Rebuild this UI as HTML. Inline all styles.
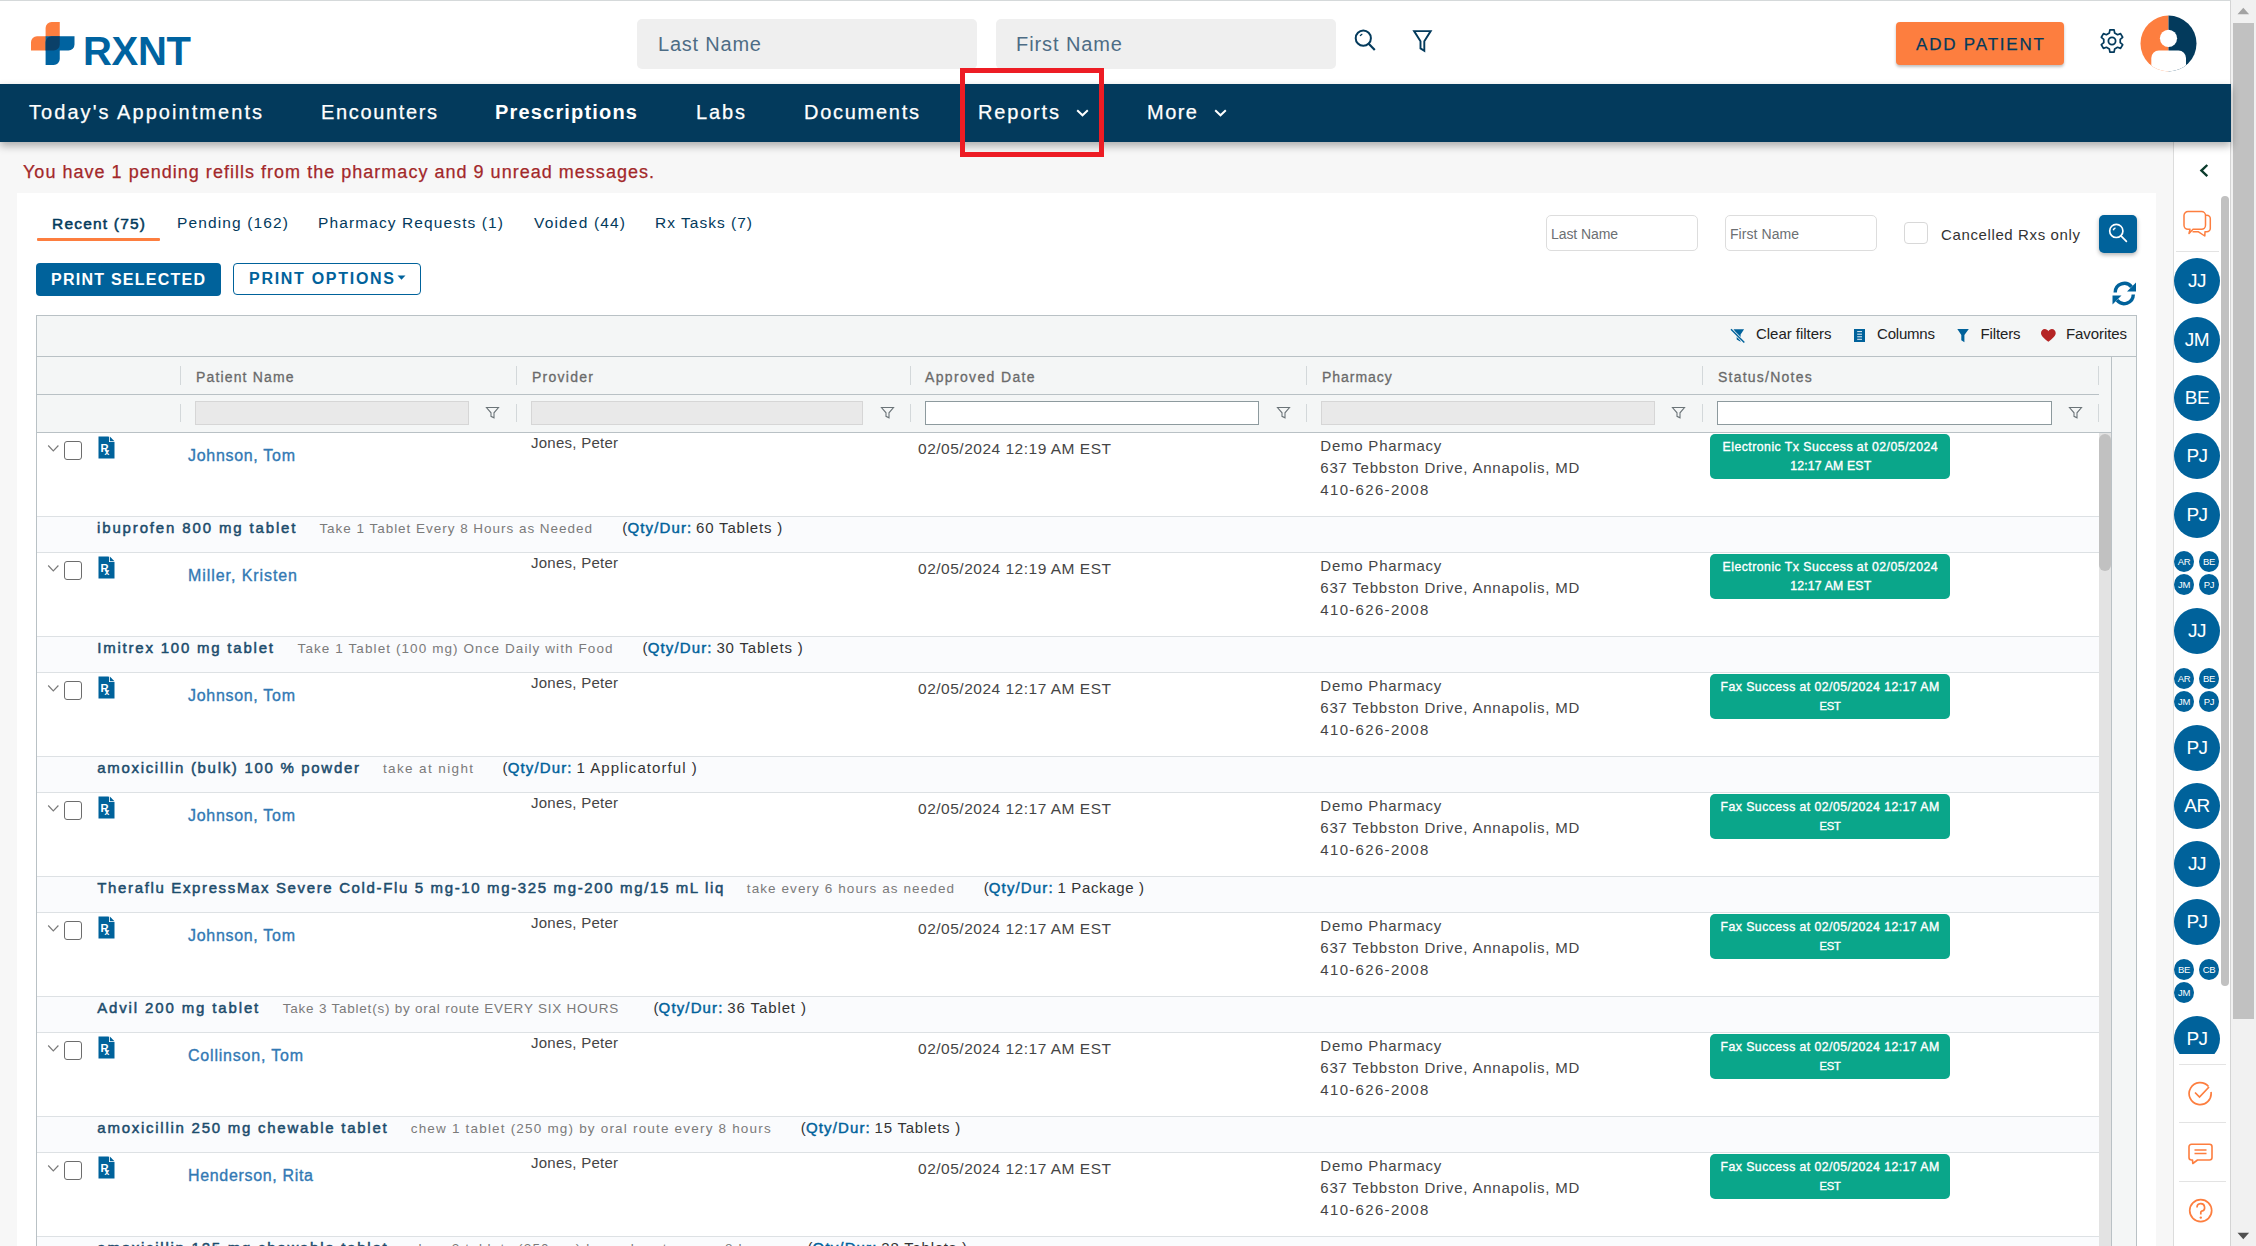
<!DOCTYPE html><html><head><meta charset="utf-8"><style>html,body{margin:0;padding:0;}
body{width:2256px;height:1246px;overflow:hidden;position:relative;background:#f7f7f7;font-family:"Liberation Sans",sans-serif;}
div,svg{box-sizing:border-box;}
</style></head><body><div style="position:absolute;left:0px;top:0px;width:2231px;height:84px;background:#fff;"></div>
<div style="position:absolute;left:0px;top:0px;width:2256px;height:1px;background:#d5d9da;"></div>
<svg style="position:absolute;left:28px;top:19px;" width="50" height="50" viewBox="0 0 50 50">
<path d="M17.6 9 A6 6 0 0 1 23.6 3 H31.75 V31.6 H3 V23.25 A6 6 0 0 1 9 17.25 H17.6 Z" fill="#fd7e3f"/>
<path d="M17.6 17.25 H46.5 V25.6 A6 6 0 0 1 40.5 31.6 H31.75 V40 A6 6 0 0 1 25.75 46 H17.6 Z" fill="#0063a0"/>
<path d="M17.6 23.25 A6 6 0 0 1 23.6 17.25 H31.75 V25.6 A6 6 0 0 1 25.75 31.6 H17.6 Z" fill="#0b4068"/>
</svg>
<div style="position:absolute;left:83px;top:29.00px;white-space:pre;font-family:&quot;Liberation Sans&quot;, sans-serif;font-size:40px;font-weight:700;color:#0063a0;letter-spacing:-0.297px;">RXNT</div>
<div style="position:absolute;left:637px;top:19px;width:340px;height:50px;background:#efefef;border-radius:5px;"></div>
<div style="position:absolute;left:996px;top:19px;width:340px;height:50px;background:#efefef;border-radius:5px;"></div>
<div style="position:absolute;left:658px;top:33.00px;white-space:pre;font-family:&quot;Liberation Sans&quot;, sans-serif;font-size:20px;font-weight:400;color:#4d6c85;letter-spacing:0.785px;">Last Name</div>
<div style="position:absolute;left:1016px;top:33.00px;white-space:pre;font-family:&quot;Liberation Sans&quot;, sans-serif;font-size:20px;font-weight:400;color:#4d6c85;letter-spacing:0.911px;">First Name</div>
<svg style="position:absolute;left:1350px;top:26px;" width="30" height="30" viewBox="0 0 30 30"><circle cx="13.3" cy="12.2" r="7.6" fill="none" stroke="#033a5c" stroke-width="2"/><path d="M18.7 17.7 L24.8 23.9" stroke="#033a5c" stroke-width="2.2"/><path d="M10.2 10 A3.8 3.8 0 0 1 12.3 8.1" fill="none" stroke="#033a5c" stroke-width="1.5"/></svg>
<svg style="position:absolute;left:1410px;top:27px;" width="26" height="28" viewBox="0 0 26 28"><path d="M4.1 4.1 H20.7 L14.3 14.3 V23.8 L10.5 21.4 V14.3 Z" fill="none" stroke="#033a5c" stroke-width="1.9" stroke-linejoin="miter"/></svg>
<div style="position:absolute;left:1896px;top:22px;width:168px;height:43px;background:#fd7e3f;border-radius:4px;box-shadow:0 2px 3px rgba(0,0,0,0.25);"></div>
<div style="position:absolute;left:1916px;top:35.00px;white-space:pre;font-family:&quot;Liberation Sans&quot;, sans-serif;font-size:17px;font-weight:400;color:#033a5c;letter-spacing:1.811px;-webkit-text-stroke:0.25px #033a5c;">ADD PATIENT</div>
<svg style="position:absolute;left:2099.5px;top:29px;" width="24" height="24" viewBox="0 0 24 24"><path d="M9.32 4.04 L9.88 0.90 L14.12 0.90 L14.68 4.04 L17.56 5.70 L20.55 4.62 L22.67 8.28 L20.23 10.34 L20.23 13.66 L22.67 15.72 L20.55 19.38 L17.56 18.30 L14.68 19.96 L14.12 23.10 L9.88 23.10 L9.32 19.96 L6.44 18.30 L3.45 19.38 L1.33 15.72 L3.77 13.66 L3.77 10.34 L1.33 8.28 L3.45 4.62 L6.44 5.70 Z" fill="none" stroke="#033a5c" stroke-width="1.7" stroke-linejoin="round"/><circle cx="12" cy="12" r="3.6" fill="none" stroke="#033a5c" stroke-width="1.8"/></svg>
<svg style="position:absolute;left:2140px;top:15px;" width="57" height="57" viewBox="0 0 57 57"><defs><clipPath id="avc"><circle cx="28.5" cy="28.5" r="28"/></clipPath></defs>
<g clip-path="url(#avc)"><rect x="0" y="0" width="28.5" height="57" fill="#fd7e3f"/><rect x="28.5" y="0" width="29" height="57" fill="#033a5c"/>
<circle cx="28.5" cy="23.3" r="8.6" fill="#fff"/><rect x="11.3" y="35.5" width="34.7" height="30" rx="7.5" fill="#fff"/></g></svg>
<div style="position:absolute;left:0px;top:84px;width:2231px;height:58px;background:#033a5c;box-shadow:0 4px 8px rgba(0,0,0,0.30);z-index:5;"></div>
<div style="position:absolute;left:29px;top:101.00px;white-space:pre;font-family:&quot;Liberation Sans&quot;, sans-serif;font-size:20px;font-weight:400;color:#fff;letter-spacing:2.056px;z-index:6;-webkit-text-stroke:0.25px #fff;">Today&#x27;s Appointments</div>
<div style="position:absolute;left:321px;top:101.00px;white-space:pre;font-family:&quot;Liberation Sans&quot;, sans-serif;font-size:20px;font-weight:400;color:#fff;letter-spacing:1.648px;z-index:6;-webkit-text-stroke:0.25px #fff;">Encounters</div>
<div style="position:absolute;left:495px;top:101.00px;white-space:pre;font-family:&quot;Liberation Sans&quot;, sans-serif;font-size:20px;font-weight:700;color:#fff;letter-spacing:1.181px;z-index:6;">Prescriptions</div>
<div style="position:absolute;left:696px;top:101.00px;white-space:pre;font-family:&quot;Liberation Sans&quot;, sans-serif;font-size:20px;font-weight:400;color:#fff;letter-spacing:1.875px;z-index:6;-webkit-text-stroke:0.25px #fff;">Labs</div>
<div style="position:absolute;left:804px;top:101.00px;white-space:pre;font-family:&quot;Liberation Sans&quot;, sans-serif;font-size:20px;font-weight:400;color:#fff;letter-spacing:1.730px;z-index:6;-webkit-text-stroke:0.25px #fff;">Documents</div>
<div style="position:absolute;left:978px;top:101.00px;white-space:pre;font-family:&quot;Liberation Sans&quot;, sans-serif;font-size:20px;font-weight:400;color:#fff;letter-spacing:1.828px;z-index:6;-webkit-text-stroke:0.25px #fff;">Reports</div>
<div style="position:absolute;left:1147px;top:101.00px;white-space:pre;font-family:&quot;Liberation Sans&quot;, sans-serif;font-size:20px;font-weight:400;color:#fff;letter-spacing:1.474px;z-index:6;-webkit-text-stroke:0.25px #fff;">More</div>
<svg style="position:absolute;left:1075px;top:107px;z-index:6;" width="15" height="12" viewBox="0 0 15 12"><path d="M2.2 3.3 L7.5 8.3 L12.8 3.3" fill="none" stroke="#fff" stroke-width="2"/></svg>
<svg style="position:absolute;left:1213px;top:107px;z-index:6;" width="15" height="12" viewBox="0 0 15 12"><path d="M2.2 3.3 L7.5 8.3 L12.8 3.3" fill="none" stroke="#fff" stroke-width="2"/></svg>
<div style="position:absolute;left:960px;top:68px;width:144px;height:89px;border:5px solid #ed1c24;z-index:7;"></div>
<div style="position:absolute;left:23px;top:162.00px;white-space:pre;font-family:&quot;Liberation Sans&quot;, sans-serif;font-size:18px;font-weight:400;color:#a3282a;letter-spacing:1.020px;-webkit-text-stroke:0.25px #a3282a;">You have 1 pending refills from the pharmacy and 9 unread messages.</div>
<div style="position:absolute;left:17px;top:193px;width:2139px;height:1100px;background:#fff;"></div>
<div style="position:absolute;left:52px;top:215.00px;white-space:pre;font-family:&quot;Liberation Sans&quot;, sans-serif;font-size:15.5px;font-weight:400;color:#033a5c;letter-spacing:1.202px;-webkit-text-stroke:0.5px #033a5c;">Recent (75)</div>
<div style="position:absolute;left:177px;top:214.00px;white-space:pre;font-family:&quot;Liberation Sans&quot;, sans-serif;font-size:15.5px;font-weight:400;color:#033a5c;letter-spacing:1.135px;">Pending (162)</div>
<div style="position:absolute;left:318px;top:214.00px;white-space:pre;font-family:&quot;Liberation Sans&quot;, sans-serif;font-size:15.5px;font-weight:400;color:#033a5c;letter-spacing:1.109px;">Pharmacy Requests (1)</div>
<div style="position:absolute;left:534px;top:214.00px;white-space:pre;font-family:&quot;Liberation Sans&quot;, sans-serif;font-size:15.5px;font-weight:400;color:#033a5c;letter-spacing:1.172px;">Voided (44)</div>
<div style="position:absolute;left:655px;top:214.00px;white-space:pre;font-family:&quot;Liberation Sans&quot;, sans-serif;font-size:15.5px;font-weight:400;color:#033a5c;letter-spacing:1.014px;">Rx Tasks (7)</div>
<div style="position:absolute;left:37px;top:238px;width:123px;height:3px;background:#fd7e3f;border-radius:1px;"></div>
<div style="position:absolute;left:36px;top:263px;width:185px;height:33px;background:#00629b;border-radius:4px;"></div>
<div style="position:absolute;left:51px;top:271.00px;white-space:pre;font-family:&quot;Liberation Sans&quot;, sans-serif;font-size:16px;font-weight:700;color:#fff;letter-spacing:1.246px;">PRINT SELECTED</div>
<div style="position:absolute;left:233px;top:263px;width:188px;height:32px;border:1px solid #00629b;border-radius:4px;background:#fff;"></div>
<div style="position:absolute;left:249px;top:270.00px;white-space:pre;font-family:&quot;Liberation Sans&quot;, sans-serif;font-size:16px;font-weight:700;color:#00629b;letter-spacing:1.712px;">PRINT OPTIONS</div>
<svg style="position:absolute;left:397px;top:275px;" width="10" height="6" viewBox="0 0 10 6"><path d="M0.5 0.5 H8.5 L4.5 4.8 Z" fill="#00629b"/></svg>
<div style="position:absolute;left:1546px;top:215px;width:152px;height:36px;border:1px solid #ddd;border-radius:5px;background:#fff;"></div>
<div style="position:absolute;left:1725px;top:215px;width:152px;height:36px;border:1px solid #ddd;border-radius:5px;background:#fff;"></div>
<div style="position:absolute;left:1551px;top:226.00px;white-space:pre;font-family:&quot;Liberation Sans&quot;, sans-serif;font-size:14px;font-weight:400;color:#6c6f73;letter-spacing:-0.088px;">Last Name</div>
<div style="position:absolute;left:1730px;top:226.00px;white-space:pre;font-family:&quot;Liberation Sans&quot;, sans-serif;font-size:14px;font-weight:400;color:#6c6f73;letter-spacing:0.061px;">First Name</div>
<div style="position:absolute;left:1904px;top:222px;width:24px;height:22px;border:1px solid #d8d8d8;border-radius:4px;background:#fff;"></div>
<div style="position:absolute;left:1941px;top:226.00px;white-space:pre;font-family:&quot;Liberation Sans&quot;, sans-serif;font-size:15px;font-weight:400;color:#333;letter-spacing:0.623px;">Cancelled Rxs only</div>
<div style="position:absolute;left:2099px;top:215px;width:38px;height:38px;background:#00629b;border-radius:5px;box-shadow:0 2px 4px rgba(0,0,0,0.3);"></div>
<svg style="position:absolute;left:2107px;top:222px;" width="24" height="24" viewBox="0 0 24 24"><circle cx="9.3" cy="8.9" r="6.6" fill="none" stroke="#fff" stroke-width="1.7"/><path d="M14 13.8 L19.4 19.4" stroke="#fff" stroke-width="1.7" stroke-linecap="round"/><path d="M6.3 8.2 A3.2 3.2 0 0 1 8.5 5.9" fill="none" stroke="#fff" stroke-width="1.5"/></svg>
<svg style="position:absolute;left:2111px;top:280px;" width="27" height="27" viewBox="0 0 27 27"><path d="M4.2 12.5 A9.2 9.2 0 0 1 20.5 6.8" fill="none" stroke="#00629b" stroke-width="3.4"/>
<path d="M25 2.5 V11.5 H16 Z" fill="#00629b"/>
<path d="M22.3 14.5 A9.2 9.2 0 0 1 6 20.2" fill="none" stroke="#00629b" stroke-width="3.4"/>
<path d="M1.5 24.5 V15.5 H10.5 Z" fill="#00629b"/></svg>
<div style="position:absolute;left:36px;top:315px;width:2101px;height:1000px;border:1px solid #b9c1c5;background:#fff;"></div>
<div style="position:absolute;left:37px;top:316px;width:2099px;height:41px;background:#f4f6f6;border-bottom:1px solid #b9c1c5;"></div>
<div style="position:absolute;left:37px;top:357px;width:2074px;height:75px;background:#f4f6f6;"></div>
<div style="position:absolute;left:37px;top:394px;width:2062px;height:1px;background:#b9c1c5;"></div>
<div style="position:absolute;left:37px;top:432px;width:2074px;height:1px;background:#b9c1c5;"></div>
<div style="position:absolute;left:2111px;top:357px;width:25px;height:1000px;background:#f4f6f6;border-left:1px solid #b9c1c5;"></div>
<div style="position:absolute;left:180px;top:366px;width:1px;height:19px;background:#d3d8da;"></div>
<div style="position:absolute;left:180px;top:404px;width:1px;height:18px;background:#d3d8da;"></div>
<div style="position:absolute;left:516px;top:366px;width:1px;height:19px;background:#d3d8da;"></div>
<div style="position:absolute;left:516px;top:404px;width:1px;height:18px;background:#d3d8da;"></div>
<div style="position:absolute;left:910px;top:366px;width:1px;height:19px;background:#d3d8da;"></div>
<div style="position:absolute;left:910px;top:404px;width:1px;height:18px;background:#d3d8da;"></div>
<div style="position:absolute;left:1306px;top:366px;width:1px;height:19px;background:#d3d8da;"></div>
<div style="position:absolute;left:1306px;top:404px;width:1px;height:18px;background:#d3d8da;"></div>
<div style="position:absolute;left:1702px;top:366px;width:1px;height:19px;background:#d3d8da;"></div>
<div style="position:absolute;left:1702px;top:404px;width:1px;height:18px;background:#d3d8da;"></div>
<div style="position:absolute;left:2098px;top:366px;width:1px;height:19px;background:#d3d8da;"></div>
<div style="position:absolute;left:2098px;top:404px;width:1px;height:18px;background:#d3d8da;"></div>
<div style="position:absolute;left:196px;top:369.00px;white-space:pre;font-family:&quot;Liberation Sans&quot;, sans-serif;font-size:14px;font-weight:400;color:#6a6a6a;letter-spacing:1.152px;-webkit-text-stroke:0.3px #6a6a6a;">Patient Name</div>
<div style="position:absolute;left:532px;top:369.00px;white-space:pre;font-family:&quot;Liberation Sans&quot;, sans-serif;font-size:14px;font-weight:400;color:#6a6a6a;letter-spacing:1.266px;-webkit-text-stroke:0.3px #6a6a6a;">Provider</div>
<div style="position:absolute;left:925px;top:369.00px;white-space:pre;font-family:&quot;Liberation Sans&quot;, sans-serif;font-size:14px;font-weight:400;color:#6a6a6a;letter-spacing:1.349px;-webkit-text-stroke:0.3px #6a6a6a;">Approved Date</div>
<div style="position:absolute;left:1322px;top:369.00px;white-space:pre;font-family:&quot;Liberation Sans&quot;, sans-serif;font-size:14px;font-weight:400;color:#6a6a6a;letter-spacing:0.953px;-webkit-text-stroke:0.3px #6a6a6a;">Pharmacy</div>
<div style="position:absolute;left:1718px;top:369.00px;white-space:pre;font-family:&quot;Liberation Sans&quot;, sans-serif;font-size:14px;font-weight:400;color:#6a6a6a;letter-spacing:1.231px;-webkit-text-stroke:0.3px #6a6a6a;">Status/Notes</div>
<div style="position:absolute;left:195px;top:401px;width:274px;height:24px;background:#e9e9e9;border:1px solid #d6d6d6;"></div>
<svg style="position:absolute;left:485px;top:406px;" width="16" height="13" viewBox="0 0 16 13"><path d="M1.5 1.5 H13.5 L9 6.8 V11.8 L6 10.3 V6.8 Z" fill="none" stroke="#6b7478" stroke-width="1.1" stroke-linejoin="miter"/></svg>
<div style="position:absolute;left:531px;top:401px;width:332px;height:24px;background:#e9e9e9;border:1px solid #d6d6d6;"></div>
<svg style="position:absolute;left:880px;top:406px;" width="16" height="13" viewBox="0 0 16 13"><path d="M1.5 1.5 H13.5 L9 6.8 V11.8 L6 10.3 V6.8 Z" fill="none" stroke="#6b7478" stroke-width="1.1" stroke-linejoin="miter"/></svg>
<div style="position:absolute;left:925px;top:401px;width:334px;height:24px;background:#fff;border:1px solid #8d9a9e;"></div>
<svg style="position:absolute;left:1275.5px;top:406px;" width="16" height="13" viewBox="0 0 16 13"><path d="M1.5 1.5 H13.5 L9 6.8 V11.8 L6 10.3 V6.8 Z" fill="none" stroke="#6b7478" stroke-width="1.1" stroke-linejoin="miter"/></svg>
<div style="position:absolute;left:1321px;top:401px;width:334px;height:24px;background:#e9e9e9;border:1px solid #d6d6d6;"></div>
<svg style="position:absolute;left:1671px;top:406px;" width="16" height="13" viewBox="0 0 16 13"><path d="M1.5 1.5 H13.5 L9 6.8 V11.8 L6 10.3 V6.8 Z" fill="none" stroke="#6b7478" stroke-width="1.1" stroke-linejoin="miter"/></svg>
<div style="position:absolute;left:1717px;top:401px;width:335px;height:24px;background:#fff;border:1px solid #8d9a9e;"></div>
<svg style="position:absolute;left:2068px;top:406px;" width="16" height="13" viewBox="0 0 16 13"><path d="M1.5 1.5 H13.5 L9 6.8 V11.8 L6 10.3 V6.8 Z" fill="none" stroke="#6b7478" stroke-width="1.1" stroke-linejoin="miter"/></svg>
<div style="position:absolute;left:1756px;top:325.00px;white-space:pre;font-family:&quot;Liberation Sans&quot;, sans-serif;font-size:15px;font-weight:400;color:#222;letter-spacing:-0.030px;">Clear filters</div>
<div style="position:absolute;left:1877px;top:325.00px;white-space:pre;font-family:&quot;Liberation Sans&quot;, sans-serif;font-size:15px;font-weight:400;color:#222;letter-spacing:-0.198px;">Columns</div>
<div style="position:absolute;left:1980.5px;top:325.00px;white-space:pre;font-family:&quot;Liberation Sans&quot;, sans-serif;font-size:15px;font-weight:400;color:#222;letter-spacing:-0.141px;">Filters</div>
<div style="position:absolute;left:2066px;top:325.00px;white-space:pre;font-family:&quot;Liberation Sans&quot;, sans-serif;font-size:15px;font-weight:400;color:#222;letter-spacing:-0.086px;">Favorites</div>
<svg style="position:absolute;left:1729px;top:327px;" width="17" height="17" viewBox="0 0 17 17"><path d="M4.5 2.2 H15.1 L11.6 7.5 V14.8 L7.7 12.6 V7.5 Z" fill="#00629b"/><path d="M2 2.2 L15.3 15.6" stroke="#f4f6f6" stroke-width="2.8"/><path d="M2 2.2 L15.3 15.6" stroke="#00629b" stroke-width="1.4"/></svg>
<svg style="position:absolute;left:1853px;top:327px;" width="13" height="17" viewBox="0 0 13 17"><rect x="1" y="2" width="11" height="13" fill="#00629b"/><path d="M4.2 4.6 H9 M4.2 7.2 H9 M4.2 9.8 H9 M4.2 12.3 H9" stroke="#fff" stroke-width="0.9"/></svg>
<svg style="position:absolute;left:1956px;top:328px;" width="14" height="16" viewBox="0 0 14 16"><path d="M1.3 1 H12.8 L8.4 7 V14.2 L5.3 12.3 V7 Z" fill="#00629b"/></svg>
<svg style="position:absolute;left:2041px;top:329px;" width="15" height="13" viewBox="0 0 15 13"><path d="M7.35 12.8 C2.5 9 0 6.8 0 4 C0 1.8 1.7 0 3.8 0 C5.4 0 6.6 1 7.35 2.2 C8.1 1 9.3 0 10.9 0 C13 0 14.7 1.8 14.7 4 C14.7 6.8 12.2 9 7.35 12.8 Z" fill="#b52525"/></svg>
<div style="position:absolute;left:2099px;top:433px;width:12px;height:900px;background:#e3e3e3;"></div>
<div style="position:absolute;left:2099px;top:434px;width:12px;height:137px;background:#c1c1c1;border-radius:6px;"></div>
<div style="position:absolute;left:37px;top:516px;width:2062px;height:1px;background:#dde1e4;"></div>
<div style="position:absolute;left:37px;top:517px;width:2062px;height:35px;background:#fafbfd;"></div>
<div style="position:absolute;left:37px;top:552px;width:2062px;height:1px;background:#dde1e4;"></div>
<svg style="position:absolute;left:47px;top:444px;" width="13" height="9" viewBox="0 0 13 9"><path d="M1.2 1.5 L6.3 6.8 L11.4 1.5" fill="none" stroke="#7a7a7a" stroke-width="1.2"/></svg>
<div style="position:absolute;left:64px;top:441px;width:18px;height:19px;border:1.5px solid #6d6d6d;border-radius:3px;background:#fff;"></div>
<svg style="position:absolute;left:98px;top:436px;" width="17" height="23" viewBox="0 0 17 23"><path d="M0.5 0.5 H10.5 L16.5 6.5 V22.5 H0.5 Z" fill="#00629b"/>
<path d="M11 0 L11 6 L17 6 Z" fill="#fff"/><path d="M11.8 0.5 L16.5 5.2 H11.8 Z" fill="#00629b"/>
<text x="2.4" y="16.3" font-family="Liberation Sans" font-weight="700" font-size="11.2" fill="#fff">R</text>
<text x="6.6" y="19" font-family="Liberation Sans" font-weight="700" font-size="8.5" fill="#fff">x</text></svg>
<div style="position:absolute;left:188px;top:447.00px;white-space:pre;font-family:&quot;Liberation Sans&quot;, sans-serif;font-size:16px;font-weight:400;color:#3279b4;letter-spacing:0.697px;-webkit-text-stroke:0.35px #3279b4;">Johnson, Tom</div>
<div style="position:absolute;left:531px;top:434.00px;white-space:pre;font-family:&quot;Liberation Sans&quot;, sans-serif;font-size:15px;font-weight:400;color:#454545;letter-spacing:0.253px;">Jones, Peter</div>
<div style="position:absolute;left:918px;top:440.00px;white-space:pre;font-family:&quot;Liberation Sans&quot;, sans-serif;font-size:15.5px;font-weight:400;color:#454545;letter-spacing:0.508px;">02/05/2024 12:19 AM EST</div>
<div style="position:absolute;left:1320.3px;top:437.00px;white-space:pre;font-family:&quot;Liberation Sans&quot;, sans-serif;font-size:15px;font-weight:400;color:#454545;letter-spacing:0.775px;">Demo Pharmacy</div>
<div style="position:absolute;left:1320.3px;top:459.00px;white-space:pre;font-family:&quot;Liberation Sans&quot;, sans-serif;font-size:15px;font-weight:400;color:#454545;letter-spacing:0.780px;">637 Tebbston Drive, Annapolis, MD</div>
<div style="position:absolute;left:1320.3px;top:481.00px;white-space:pre;font-family:&quot;Liberation Sans&quot;, sans-serif;font-size:15px;font-weight:400;color:#454545;letter-spacing:1.325px;">410-626-2008</div>
<div style="position:absolute;left:1710px;top:434px;width:240px;height:45px;background:#0aa68a;border-radius:5px;"></div>
<div style="position:absolute;left:1722.6px;top:440.00px;white-space:pre;font-family:&quot;Liberation Sans&quot;, sans-serif;font-size:12.3px;font-weight:400;color:#fff;letter-spacing:0.460px;-webkit-text-stroke:0.35px #fff;">Electronic Tx Success at 02/05/2024</div>
<div style="position:absolute;left:1790.2px;top:459.00px;white-space:pre;font-family:&quot;Liberation Sans&quot;, sans-serif;font-size:12.3px;font-weight:400;color:#fff;letter-spacing:0.155px;-webkit-text-stroke:0.35px #fff;">12:17 AM EST</div>
<div style="position:absolute;left:97px;top:519.00px;white-space:pre;font-family:&quot;Liberation Sans&quot;, sans-serif;font-size:15px;font-weight:400;color:#1c4c6c;letter-spacing:1.858px;-webkit-text-stroke:0.5px #1c4c6c;">ibuprofen 800 mg tablet</div>
<div style="position:absolute;left:319.4px;top:521.00px;white-space:pre;font-family:&quot;Liberation Sans&quot;, sans-serif;font-size:13.5px;font-weight:400;color:#7a7a7a;letter-spacing:0.971px;">Take 1 Tablet Every 8 Hours as Needed</div>
<div style="position:absolute;left:622.3px;top:519.00px;white-space:pre;font-family:&quot;Liberation Sans&quot;, sans-serif;font-size:15px;font-weight:400;color:#333;letter-spacing:0.000px;">(</div>
<div style="position:absolute;left:627.4px;top:519.00px;white-space:pre;font-family:&quot;Liberation Sans&quot;, sans-serif;font-size:15px;font-weight:400;color:#00629b;letter-spacing:1.137px;-webkit-text-stroke:0.45px #00629b;">Qty/Dur:</div>
<div style="position:absolute;left:696.0999999999999px;top:519.00px;white-space:pre;font-family:&quot;Liberation Sans&quot;, sans-serif;font-size:15px;font-weight:400;color:#333;letter-spacing:0.811px;">60 Tablets )</div>
<div style="position:absolute;left:37px;top:636px;width:2062px;height:1px;background:#dde1e4;"></div>
<div style="position:absolute;left:37px;top:637px;width:2062px;height:35px;background:#fafbfd;"></div>
<div style="position:absolute;left:37px;top:672px;width:2062px;height:1px;background:#dde1e4;"></div>
<svg style="position:absolute;left:47px;top:564px;" width="13" height="9" viewBox="0 0 13 9"><path d="M1.2 1.5 L6.3 6.8 L11.4 1.5" fill="none" stroke="#7a7a7a" stroke-width="1.2"/></svg>
<div style="position:absolute;left:64px;top:561px;width:18px;height:19px;border:1.5px solid #6d6d6d;border-radius:3px;background:#fff;"></div>
<svg style="position:absolute;left:98px;top:556px;" width="17" height="23" viewBox="0 0 17 23"><path d="M0.5 0.5 H10.5 L16.5 6.5 V22.5 H0.5 Z" fill="#00629b"/>
<path d="M11 0 L11 6 L17 6 Z" fill="#fff"/><path d="M11.8 0.5 L16.5 5.2 H11.8 Z" fill="#00629b"/>
<text x="2.4" y="16.3" font-family="Liberation Sans" font-weight="700" font-size="11.2" fill="#fff">R</text>
<text x="6.6" y="19" font-family="Liberation Sans" font-weight="700" font-size="8.5" fill="#fff">x</text></svg>
<div style="position:absolute;left:188px;top:567.00px;white-space:pre;font-family:&quot;Liberation Sans&quot;, sans-serif;font-size:16px;font-weight:400;color:#3279b4;letter-spacing:0.926px;-webkit-text-stroke:0.35px #3279b4;">Miller, Kristen</div>
<div style="position:absolute;left:531px;top:554.00px;white-space:pre;font-family:&quot;Liberation Sans&quot;, sans-serif;font-size:15px;font-weight:400;color:#454545;letter-spacing:0.253px;">Jones, Peter</div>
<div style="position:absolute;left:918px;top:560.00px;white-space:pre;font-family:&quot;Liberation Sans&quot;, sans-serif;font-size:15.5px;font-weight:400;color:#454545;letter-spacing:0.508px;">02/05/2024 12:19 AM EST</div>
<div style="position:absolute;left:1320.3px;top:557.00px;white-space:pre;font-family:&quot;Liberation Sans&quot;, sans-serif;font-size:15px;font-weight:400;color:#454545;letter-spacing:0.775px;">Demo Pharmacy</div>
<div style="position:absolute;left:1320.3px;top:579.00px;white-space:pre;font-family:&quot;Liberation Sans&quot;, sans-serif;font-size:15px;font-weight:400;color:#454545;letter-spacing:0.780px;">637 Tebbston Drive, Annapolis, MD</div>
<div style="position:absolute;left:1320.3px;top:601.00px;white-space:pre;font-family:&quot;Liberation Sans&quot;, sans-serif;font-size:15px;font-weight:400;color:#454545;letter-spacing:1.325px;">410-626-2008</div>
<div style="position:absolute;left:1710px;top:554px;width:240px;height:45px;background:#0aa68a;border-radius:5px;"></div>
<div style="position:absolute;left:1722.6px;top:560.00px;white-space:pre;font-family:&quot;Liberation Sans&quot;, sans-serif;font-size:12.3px;font-weight:400;color:#fff;letter-spacing:0.460px;-webkit-text-stroke:0.35px #fff;">Electronic Tx Success at 02/05/2024</div>
<div style="position:absolute;left:1790.2px;top:579.00px;white-space:pre;font-family:&quot;Liberation Sans&quot;, sans-serif;font-size:12.3px;font-weight:400;color:#fff;letter-spacing:0.155px;-webkit-text-stroke:0.35px #fff;">12:17 AM EST</div>
<div style="position:absolute;left:97.2px;top:639.00px;white-space:pre;font-family:&quot;Liberation Sans&quot;, sans-serif;font-size:15px;font-weight:400;color:#1c4c6c;letter-spacing:1.787px;-webkit-text-stroke:0.5px #1c4c6c;">Imitrex 100 mg tablet</div>
<div style="position:absolute;left:297.6px;top:641.00px;white-space:pre;font-family:&quot;Liberation Sans&quot;, sans-serif;font-size:13.5px;font-weight:400;color:#7a7a7a;letter-spacing:1.090px;">Take 1 Tablet (100 mg) Once Daily with Food</div>
<div style="position:absolute;left:642.6px;top:639.00px;white-space:pre;font-family:&quot;Liberation Sans&quot;, sans-serif;font-size:15px;font-weight:400;color:#333;letter-spacing:0.000px;">(</div>
<div style="position:absolute;left:647.7px;top:639.00px;white-space:pre;font-family:&quot;Liberation Sans&quot;, sans-serif;font-size:15px;font-weight:400;color:#00629b;letter-spacing:1.137px;-webkit-text-stroke:0.45px #00629b;">Qty/Dur:</div>
<div style="position:absolute;left:716.4px;top:639.00px;white-space:pre;font-family:&quot;Liberation Sans&quot;, sans-serif;font-size:15px;font-weight:400;color:#333;letter-spacing:0.820px;">30 Tablets )</div>
<div style="position:absolute;left:37px;top:756px;width:2062px;height:1px;background:#dde1e4;"></div>
<div style="position:absolute;left:37px;top:757px;width:2062px;height:35px;background:#fafbfd;"></div>
<div style="position:absolute;left:37px;top:792px;width:2062px;height:1px;background:#dde1e4;"></div>
<svg style="position:absolute;left:47px;top:684px;" width="13" height="9" viewBox="0 0 13 9"><path d="M1.2 1.5 L6.3 6.8 L11.4 1.5" fill="none" stroke="#7a7a7a" stroke-width="1.2"/></svg>
<div style="position:absolute;left:64px;top:681px;width:18px;height:19px;border:1.5px solid #6d6d6d;border-radius:3px;background:#fff;"></div>
<svg style="position:absolute;left:98px;top:676px;" width="17" height="23" viewBox="0 0 17 23"><path d="M0.5 0.5 H10.5 L16.5 6.5 V22.5 H0.5 Z" fill="#00629b"/>
<path d="M11 0 L11 6 L17 6 Z" fill="#fff"/><path d="M11.8 0.5 L16.5 5.2 H11.8 Z" fill="#00629b"/>
<text x="2.4" y="16.3" font-family="Liberation Sans" font-weight="700" font-size="11.2" fill="#fff">R</text>
<text x="6.6" y="19" font-family="Liberation Sans" font-weight="700" font-size="8.5" fill="#fff">x</text></svg>
<div style="position:absolute;left:188px;top:687.00px;white-space:pre;font-family:&quot;Liberation Sans&quot;, sans-serif;font-size:16px;font-weight:400;color:#3279b4;letter-spacing:0.697px;-webkit-text-stroke:0.35px #3279b4;">Johnson, Tom</div>
<div style="position:absolute;left:531px;top:674.00px;white-space:pre;font-family:&quot;Liberation Sans&quot;, sans-serif;font-size:15px;font-weight:400;color:#454545;letter-spacing:0.253px;">Jones, Peter</div>
<div style="position:absolute;left:918px;top:680.00px;white-space:pre;font-family:&quot;Liberation Sans&quot;, sans-serif;font-size:15.5px;font-weight:400;color:#454545;letter-spacing:0.508px;">02/05/2024 12:17 AM EST</div>
<div style="position:absolute;left:1320.3px;top:677.00px;white-space:pre;font-family:&quot;Liberation Sans&quot;, sans-serif;font-size:15px;font-weight:400;color:#454545;letter-spacing:0.775px;">Demo Pharmacy</div>
<div style="position:absolute;left:1320.3px;top:699.00px;white-space:pre;font-family:&quot;Liberation Sans&quot;, sans-serif;font-size:15px;font-weight:400;color:#454545;letter-spacing:0.780px;">637 Tebbston Drive, Annapolis, MD</div>
<div style="position:absolute;left:1320.3px;top:721.00px;white-space:pre;font-family:&quot;Liberation Sans&quot;, sans-serif;font-size:15px;font-weight:400;color:#454545;letter-spacing:1.325px;">410-626-2008</div>
<div style="position:absolute;left:1710px;top:674px;width:240px;height:45px;background:#0aa68a;border-radius:5px;"></div>
<div style="position:absolute;left:1720.6px;top:680.00px;white-space:pre;font-family:&quot;Liberation Sans&quot;, sans-serif;font-size:12.3px;font-weight:400;color:#fff;letter-spacing:0.430px;-webkit-text-stroke:0.35px #fff;">Fax Success at 02/05/2024 12:17 AM</div>
<div style="position:absolute;left:1819.6px;top:700.00px;white-space:pre;font-family:&quot;Liberation Sans&quot;, sans-serif;font-size:11.2px;font-weight:400;color:#fff;letter-spacing:-0.283px;-webkit-text-stroke:0.35px #fff;">EST</div>
<div style="position:absolute;left:97.2px;top:759.00px;white-space:pre;font-family:&quot;Liberation Sans&quot;, sans-serif;font-size:15px;font-weight:400;color:#1c4c6c;letter-spacing:1.695px;-webkit-text-stroke:0.5px #1c4c6c;">amoxicillin (bulk) 100 % powder</div>
<div style="position:absolute;left:382.9px;top:761.00px;white-space:pre;font-family:&quot;Liberation Sans&quot;, sans-serif;font-size:13.5px;font-weight:400;color:#7a7a7a;letter-spacing:1.386px;">take at night</div>
<div style="position:absolute;left:502.6px;top:759.00px;white-space:pre;font-family:&quot;Liberation Sans&quot;, sans-serif;font-size:15px;font-weight:400;color:#333;letter-spacing:0.000px;">(</div>
<div style="position:absolute;left:507.70000000000005px;top:759.00px;white-space:pre;font-family:&quot;Liberation Sans&quot;, sans-serif;font-size:15px;font-weight:400;color:#00629b;letter-spacing:1.137px;-webkit-text-stroke:0.45px #00629b;">Qty/Dur:</div>
<div style="position:absolute;left:576.4px;top:759.00px;white-space:pre;font-family:&quot;Liberation Sans&quot;, sans-serif;font-size:15px;font-weight:400;color:#333;letter-spacing:1.063px;">1 Applicatorful )</div>
<div style="position:absolute;left:37px;top:876px;width:2062px;height:1px;background:#dde1e4;"></div>
<div style="position:absolute;left:37px;top:877px;width:2062px;height:35px;background:#fafbfd;"></div>
<div style="position:absolute;left:37px;top:912px;width:2062px;height:1px;background:#dde1e4;"></div>
<svg style="position:absolute;left:47px;top:804px;" width="13" height="9" viewBox="0 0 13 9"><path d="M1.2 1.5 L6.3 6.8 L11.4 1.5" fill="none" stroke="#7a7a7a" stroke-width="1.2"/></svg>
<div style="position:absolute;left:64px;top:801px;width:18px;height:19px;border:1.5px solid #6d6d6d;border-radius:3px;background:#fff;"></div>
<svg style="position:absolute;left:98px;top:796px;" width="17" height="23" viewBox="0 0 17 23"><path d="M0.5 0.5 H10.5 L16.5 6.5 V22.5 H0.5 Z" fill="#00629b"/>
<path d="M11 0 L11 6 L17 6 Z" fill="#fff"/><path d="M11.8 0.5 L16.5 5.2 H11.8 Z" fill="#00629b"/>
<text x="2.4" y="16.3" font-family="Liberation Sans" font-weight="700" font-size="11.2" fill="#fff">R</text>
<text x="6.6" y="19" font-family="Liberation Sans" font-weight="700" font-size="8.5" fill="#fff">x</text></svg>
<div style="position:absolute;left:188px;top:807.00px;white-space:pre;font-family:&quot;Liberation Sans&quot;, sans-serif;font-size:16px;font-weight:400;color:#3279b4;letter-spacing:0.697px;-webkit-text-stroke:0.35px #3279b4;">Johnson, Tom</div>
<div style="position:absolute;left:531px;top:794.00px;white-space:pre;font-family:&quot;Liberation Sans&quot;, sans-serif;font-size:15px;font-weight:400;color:#454545;letter-spacing:0.253px;">Jones, Peter</div>
<div style="position:absolute;left:918px;top:800.00px;white-space:pre;font-family:&quot;Liberation Sans&quot;, sans-serif;font-size:15.5px;font-weight:400;color:#454545;letter-spacing:0.508px;">02/05/2024 12:17 AM EST</div>
<div style="position:absolute;left:1320.3px;top:797.00px;white-space:pre;font-family:&quot;Liberation Sans&quot;, sans-serif;font-size:15px;font-weight:400;color:#454545;letter-spacing:0.775px;">Demo Pharmacy</div>
<div style="position:absolute;left:1320.3px;top:819.00px;white-space:pre;font-family:&quot;Liberation Sans&quot;, sans-serif;font-size:15px;font-weight:400;color:#454545;letter-spacing:0.780px;">637 Tebbston Drive, Annapolis, MD</div>
<div style="position:absolute;left:1320.3px;top:841.00px;white-space:pre;font-family:&quot;Liberation Sans&quot;, sans-serif;font-size:15px;font-weight:400;color:#454545;letter-spacing:1.325px;">410-626-2008</div>
<div style="position:absolute;left:1710px;top:794px;width:240px;height:45px;background:#0aa68a;border-radius:5px;"></div>
<div style="position:absolute;left:1720.6px;top:800.00px;white-space:pre;font-family:&quot;Liberation Sans&quot;, sans-serif;font-size:12.3px;font-weight:400;color:#fff;letter-spacing:0.430px;-webkit-text-stroke:0.35px #fff;">Fax Success at 02/05/2024 12:17 AM</div>
<div style="position:absolute;left:1819.6px;top:820.00px;white-space:pre;font-family:&quot;Liberation Sans&quot;, sans-serif;font-size:11.2px;font-weight:400;color:#fff;letter-spacing:-0.283px;-webkit-text-stroke:0.35px #fff;">EST</div>
<div style="position:absolute;left:97.3px;top:879.00px;white-space:pre;font-family:&quot;Liberation Sans&quot;, sans-serif;font-size:15px;font-weight:400;color:#1c4c6c;letter-spacing:1.639px;-webkit-text-stroke:0.5px #1c4c6c;">Theraflu ExpressMax Severe Cold-Flu 5 mg-10 mg-325 mg-200 mg/15 mL liq</div>
<div style="position:absolute;left:746.8px;top:881.00px;white-space:pre;font-family:&quot;Liberation Sans&quot;, sans-serif;font-size:13.5px;font-weight:400;color:#7a7a7a;letter-spacing:1.086px;">take every 6 hours as needed</div>
<div style="position:absolute;left:983.7px;top:879.00px;white-space:pre;font-family:&quot;Liberation Sans&quot;, sans-serif;font-size:15px;font-weight:400;color:#333;letter-spacing:0.000px;">(</div>
<div style="position:absolute;left:988.8000000000001px;top:879.00px;white-space:pre;font-family:&quot;Liberation Sans&quot;, sans-serif;font-size:15px;font-weight:400;color:#00629b;letter-spacing:1.137px;-webkit-text-stroke:0.45px #00629b;">Qty/Dur:</div>
<div style="position:absolute;left:1057.5px;top:879.00px;white-space:pre;font-family:&quot;Liberation Sans&quot;, sans-serif;font-size:15px;font-weight:400;color:#333;letter-spacing:0.645px;">1 Package )</div>
<div style="position:absolute;left:37px;top:996px;width:2062px;height:1px;background:#dde1e4;"></div>
<div style="position:absolute;left:37px;top:997px;width:2062px;height:35px;background:#fafbfd;"></div>
<div style="position:absolute;left:37px;top:1032px;width:2062px;height:1px;background:#dde1e4;"></div>
<svg style="position:absolute;left:47px;top:924px;" width="13" height="9" viewBox="0 0 13 9"><path d="M1.2 1.5 L6.3 6.8 L11.4 1.5" fill="none" stroke="#7a7a7a" stroke-width="1.2"/></svg>
<div style="position:absolute;left:64px;top:921px;width:18px;height:19px;border:1.5px solid #6d6d6d;border-radius:3px;background:#fff;"></div>
<svg style="position:absolute;left:98px;top:916px;" width="17" height="23" viewBox="0 0 17 23"><path d="M0.5 0.5 H10.5 L16.5 6.5 V22.5 H0.5 Z" fill="#00629b"/>
<path d="M11 0 L11 6 L17 6 Z" fill="#fff"/><path d="M11.8 0.5 L16.5 5.2 H11.8 Z" fill="#00629b"/>
<text x="2.4" y="16.3" font-family="Liberation Sans" font-weight="700" font-size="11.2" fill="#fff">R</text>
<text x="6.6" y="19" font-family="Liberation Sans" font-weight="700" font-size="8.5" fill="#fff">x</text></svg>
<div style="position:absolute;left:188px;top:927.00px;white-space:pre;font-family:&quot;Liberation Sans&quot;, sans-serif;font-size:16px;font-weight:400;color:#3279b4;letter-spacing:0.697px;-webkit-text-stroke:0.35px #3279b4;">Johnson, Tom</div>
<div style="position:absolute;left:531px;top:914.00px;white-space:pre;font-family:&quot;Liberation Sans&quot;, sans-serif;font-size:15px;font-weight:400;color:#454545;letter-spacing:0.253px;">Jones, Peter</div>
<div style="position:absolute;left:918px;top:920.00px;white-space:pre;font-family:&quot;Liberation Sans&quot;, sans-serif;font-size:15.5px;font-weight:400;color:#454545;letter-spacing:0.508px;">02/05/2024 12:17 AM EST</div>
<div style="position:absolute;left:1320.3px;top:917.00px;white-space:pre;font-family:&quot;Liberation Sans&quot;, sans-serif;font-size:15px;font-weight:400;color:#454545;letter-spacing:0.775px;">Demo Pharmacy</div>
<div style="position:absolute;left:1320.3px;top:939.00px;white-space:pre;font-family:&quot;Liberation Sans&quot;, sans-serif;font-size:15px;font-weight:400;color:#454545;letter-spacing:0.780px;">637 Tebbston Drive, Annapolis, MD</div>
<div style="position:absolute;left:1320.3px;top:961.00px;white-space:pre;font-family:&quot;Liberation Sans&quot;, sans-serif;font-size:15px;font-weight:400;color:#454545;letter-spacing:1.325px;">410-626-2008</div>
<div style="position:absolute;left:1710px;top:914px;width:240px;height:45px;background:#0aa68a;border-radius:5px;"></div>
<div style="position:absolute;left:1720.6px;top:920.00px;white-space:pre;font-family:&quot;Liberation Sans&quot;, sans-serif;font-size:12.3px;font-weight:400;color:#fff;letter-spacing:0.430px;-webkit-text-stroke:0.35px #fff;">Fax Success at 02/05/2024 12:17 AM</div>
<div style="position:absolute;left:1819.6px;top:940.00px;white-space:pre;font-family:&quot;Liberation Sans&quot;, sans-serif;font-size:11.2px;font-weight:400;color:#fff;letter-spacing:-0.283px;-webkit-text-stroke:0.35px #fff;">EST</div>
<div style="position:absolute;left:97.2px;top:999.00px;white-space:pre;font-family:&quot;Liberation Sans&quot;, sans-serif;font-size:15px;font-weight:400;color:#1c4c6c;letter-spacing:1.862px;-webkit-text-stroke:0.5px #1c4c6c;">Advil 200 mg tablet</div>
<div style="position:absolute;left:282.8px;top:1001.00px;white-space:pre;font-family:&quot;Liberation Sans&quot;, sans-serif;font-size:13.5px;font-weight:400;color:#7a7a7a;letter-spacing:0.771px;">Take 3 Tablet(s) by oral route EVERY SIX HOURS</div>
<div style="position:absolute;left:653.5px;top:999.00px;white-space:pre;font-family:&quot;Liberation Sans&quot;, sans-serif;font-size:15px;font-weight:400;color:#333;letter-spacing:0.000px;">(</div>
<div style="position:absolute;left:658.6px;top:999.00px;white-space:pre;font-family:&quot;Liberation Sans&quot;, sans-serif;font-size:15px;font-weight:400;color:#00629b;letter-spacing:1.137px;-webkit-text-stroke:0.45px #00629b;">Qty/Dur:</div>
<div style="position:absolute;left:727.3px;top:999.00px;white-space:pre;font-family:&quot;Liberation Sans&quot;, sans-serif;font-size:15px;font-weight:400;color:#333;letter-spacing:0.892px;">36 Tablet )</div>
<div style="position:absolute;left:37px;top:1116px;width:2062px;height:1px;background:#dde1e4;"></div>
<div style="position:absolute;left:37px;top:1117px;width:2062px;height:35px;background:#fafbfd;"></div>
<div style="position:absolute;left:37px;top:1152px;width:2062px;height:1px;background:#dde1e4;"></div>
<svg style="position:absolute;left:47px;top:1044px;" width="13" height="9" viewBox="0 0 13 9"><path d="M1.2 1.5 L6.3 6.8 L11.4 1.5" fill="none" stroke="#7a7a7a" stroke-width="1.2"/></svg>
<div style="position:absolute;left:64px;top:1041px;width:18px;height:19px;border:1.5px solid #6d6d6d;border-radius:3px;background:#fff;"></div>
<svg style="position:absolute;left:98px;top:1036px;" width="17" height="23" viewBox="0 0 17 23"><path d="M0.5 0.5 H10.5 L16.5 6.5 V22.5 H0.5 Z" fill="#00629b"/>
<path d="M11 0 L11 6 L17 6 Z" fill="#fff"/><path d="M11.8 0.5 L16.5 5.2 H11.8 Z" fill="#00629b"/>
<text x="2.4" y="16.3" font-family="Liberation Sans" font-weight="700" font-size="11.2" fill="#fff">R</text>
<text x="6.6" y="19" font-family="Liberation Sans" font-weight="700" font-size="8.5" fill="#fff">x</text></svg>
<div style="position:absolute;left:188px;top:1047.00px;white-space:pre;font-family:&quot;Liberation Sans&quot;, sans-serif;font-size:16px;font-weight:400;color:#3279b4;letter-spacing:0.797px;-webkit-text-stroke:0.35px #3279b4;">Collinson, Tom</div>
<div style="position:absolute;left:531px;top:1034.00px;white-space:pre;font-family:&quot;Liberation Sans&quot;, sans-serif;font-size:15px;font-weight:400;color:#454545;letter-spacing:0.253px;">Jones, Peter</div>
<div style="position:absolute;left:918px;top:1040.00px;white-space:pre;font-family:&quot;Liberation Sans&quot;, sans-serif;font-size:15.5px;font-weight:400;color:#454545;letter-spacing:0.508px;">02/05/2024 12:17 AM EST</div>
<div style="position:absolute;left:1320.3px;top:1037.00px;white-space:pre;font-family:&quot;Liberation Sans&quot;, sans-serif;font-size:15px;font-weight:400;color:#454545;letter-spacing:0.775px;">Demo Pharmacy</div>
<div style="position:absolute;left:1320.3px;top:1059.00px;white-space:pre;font-family:&quot;Liberation Sans&quot;, sans-serif;font-size:15px;font-weight:400;color:#454545;letter-spacing:0.780px;">637 Tebbston Drive, Annapolis, MD</div>
<div style="position:absolute;left:1320.3px;top:1081.00px;white-space:pre;font-family:&quot;Liberation Sans&quot;, sans-serif;font-size:15px;font-weight:400;color:#454545;letter-spacing:1.325px;">410-626-2008</div>
<div style="position:absolute;left:1710px;top:1034px;width:240px;height:45px;background:#0aa68a;border-radius:5px;"></div>
<div style="position:absolute;left:1720.6px;top:1040.00px;white-space:pre;font-family:&quot;Liberation Sans&quot;, sans-serif;font-size:12.3px;font-weight:400;color:#fff;letter-spacing:0.430px;-webkit-text-stroke:0.35px #fff;">Fax Success at 02/05/2024 12:17 AM</div>
<div style="position:absolute;left:1819.6px;top:1060.00px;white-space:pre;font-family:&quot;Liberation Sans&quot;, sans-serif;font-size:11.2px;font-weight:400;color:#fff;letter-spacing:-0.283px;-webkit-text-stroke:0.35px #fff;">EST</div>
<div style="position:absolute;left:97.3px;top:1119.00px;white-space:pre;font-family:&quot;Liberation Sans&quot;, sans-serif;font-size:15px;font-weight:400;color:#1c4c6c;letter-spacing:1.746px;-webkit-text-stroke:0.5px #1c4c6c;">amoxicillin 250 mg chewable tablet</div>
<div style="position:absolute;left:410.7px;top:1121.00px;white-space:pre;font-family:&quot;Liberation Sans&quot;, sans-serif;font-size:13.5px;font-weight:400;color:#7a7a7a;letter-spacing:1.191px;">chew 1 tablet (250 mg) by oral route every 8 hours</div>
<div style="position:absolute;left:800.8px;top:1119.00px;white-space:pre;font-family:&quot;Liberation Sans&quot;, sans-serif;font-size:15px;font-weight:400;color:#333;letter-spacing:0.000px;">(</div>
<div style="position:absolute;left:805.9px;top:1119.00px;white-space:pre;font-family:&quot;Liberation Sans&quot;, sans-serif;font-size:15px;font-weight:400;color:#00629b;letter-spacing:1.137px;-webkit-text-stroke:0.45px #00629b;">Qty/Dur:</div>
<div style="position:absolute;left:874.5999999999999px;top:1119.00px;white-space:pre;font-family:&quot;Liberation Sans&quot;, sans-serif;font-size:15px;font-weight:400;color:#333;letter-spacing:0.765px;">15 Tablets )</div>
<div style="position:absolute;left:37px;top:1236px;width:2062px;height:1px;background:#dde1e4;"></div>
<div style="position:absolute;left:37px;top:1237px;width:2062px;height:35px;background:#fafbfd;"></div>
<div style="position:absolute;left:37px;top:1272px;width:2062px;height:1px;background:#dde1e4;"></div>
<svg style="position:absolute;left:47px;top:1164px;" width="13" height="9" viewBox="0 0 13 9"><path d="M1.2 1.5 L6.3 6.8 L11.4 1.5" fill="none" stroke="#7a7a7a" stroke-width="1.2"/></svg>
<div style="position:absolute;left:64px;top:1161px;width:18px;height:19px;border:1.5px solid #6d6d6d;border-radius:3px;background:#fff;"></div>
<svg style="position:absolute;left:98px;top:1156px;" width="17" height="23" viewBox="0 0 17 23"><path d="M0.5 0.5 H10.5 L16.5 6.5 V22.5 H0.5 Z" fill="#00629b"/>
<path d="M11 0 L11 6 L17 6 Z" fill="#fff"/><path d="M11.8 0.5 L16.5 5.2 H11.8 Z" fill="#00629b"/>
<text x="2.4" y="16.3" font-family="Liberation Sans" font-weight="700" font-size="11.2" fill="#fff">R</text>
<text x="6.6" y="19" font-family="Liberation Sans" font-weight="700" font-size="8.5" fill="#fff">x</text></svg>
<div style="position:absolute;left:188px;top:1167.00px;white-space:pre;font-family:&quot;Liberation Sans&quot;, sans-serif;font-size:16px;font-weight:400;color:#3279b4;letter-spacing:0.670px;-webkit-text-stroke:0.35px #3279b4;">Henderson, Rita</div>
<div style="position:absolute;left:531px;top:1154.00px;white-space:pre;font-family:&quot;Liberation Sans&quot;, sans-serif;font-size:15px;font-weight:400;color:#454545;letter-spacing:0.253px;">Jones, Peter</div>
<div style="position:absolute;left:918px;top:1160.00px;white-space:pre;font-family:&quot;Liberation Sans&quot;, sans-serif;font-size:15.5px;font-weight:400;color:#454545;letter-spacing:0.508px;">02/05/2024 12:17 AM EST</div>
<div style="position:absolute;left:1320.3px;top:1157.00px;white-space:pre;font-family:&quot;Liberation Sans&quot;, sans-serif;font-size:15px;font-weight:400;color:#454545;letter-spacing:0.775px;">Demo Pharmacy</div>
<div style="position:absolute;left:1320.3px;top:1179.00px;white-space:pre;font-family:&quot;Liberation Sans&quot;, sans-serif;font-size:15px;font-weight:400;color:#454545;letter-spacing:0.780px;">637 Tebbston Drive, Annapolis, MD</div>
<div style="position:absolute;left:1320.3px;top:1201.00px;white-space:pre;font-family:&quot;Liberation Sans&quot;, sans-serif;font-size:15px;font-weight:400;color:#454545;letter-spacing:1.325px;">410-626-2008</div>
<div style="position:absolute;left:1710px;top:1154px;width:240px;height:45px;background:#0aa68a;border-radius:5px;"></div>
<div style="position:absolute;left:1720.6px;top:1160.00px;white-space:pre;font-family:&quot;Liberation Sans&quot;, sans-serif;font-size:12.3px;font-weight:400;color:#fff;letter-spacing:0.430px;-webkit-text-stroke:0.35px #fff;">Fax Success at 02/05/2024 12:17 AM</div>
<div style="position:absolute;left:1819.6px;top:1180.00px;white-space:pre;font-family:&quot;Liberation Sans&quot;, sans-serif;font-size:11.2px;font-weight:400;color:#fff;letter-spacing:-0.283px;-webkit-text-stroke:0.35px #fff;">EST</div>
<div style="position:absolute;left:97.3px;top:1239.00px;white-space:pre;font-family:&quot;Liberation Sans&quot;, sans-serif;font-size:15px;font-weight:400;color:#1c4c6c;letter-spacing:1.746px;-webkit-text-stroke:0.5px #1c4c6c;">amoxicillin 125 mg chewable tablet</div>
<div style="position:absolute;left:410.7px;top:1241.00px;white-space:pre;font-family:&quot;Liberation Sans&quot;, sans-serif;font-size:13.5px;font-weight:400;color:#7a7a7a;letter-spacing:1.158px;">chew 2 tablets (250 mg) by oral route every 8 hours</div>
<div style="position:absolute;left:807.5px;top:1239.00px;white-space:pre;font-family:&quot;Liberation Sans&quot;, sans-serif;font-size:15px;font-weight:400;color:#333;letter-spacing:0.000px;">(</div>
<div style="position:absolute;left:812.6px;top:1239.00px;white-space:pre;font-family:&quot;Liberation Sans&quot;, sans-serif;font-size:15px;font-weight:400;color:#00629b;letter-spacing:1.137px;-webkit-text-stroke:0.45px #00629b;">Qty/Dur:</div>
<div style="position:absolute;left:881.3px;top:1239.00px;white-space:pre;font-family:&quot;Liberation Sans&quot;, sans-serif;font-size:15px;font-weight:400;color:#333;letter-spacing:0.765px;">28 Tablets )</div>
<div style="position:absolute;left:2156px;top:142px;width:17px;height:1104px;background:#f7f7f7;"></div>
<div style="position:absolute;left:2173px;top:142px;width:58px;height:1104px;background:#fff;border-left:1px solid #dcdcdc;border-right:1px solid #d0d0d0;"></div>
<svg style="position:absolute;left:2196px;top:161px;" width="16" height="19" viewBox="0 0 16 19"><path d="M11.3 4 L5.4 9.6 L11.3 15.2" fill="none" stroke="#0b3b2c" stroke-width="2.4"/></svg>
<svg style="position:absolute;left:2182px;top:209px;" width="31" height="30" viewBox="0 0 31 30"><path d="M7 24.5 L8 20.3 H6 A4 4 0 0 1 2 16.3 V6.5 A4 4 0 0 1 6 2.5 H19.5 A4 4 0 0 1 23.5 6.5 V16.3 A4 4 0 0 1 19.5 20.3 H11 Z" fill="#fff" stroke="#fd7e3f" stroke-width="1.5" stroke-linejoin="round"/>
<path d="M23.5 6.3 H24.8 A3.5 3.5 0 0 1 28.3 9.8 V19.3 A3.5 3.5 0 0 1 24.8 22.8 H23 L22.8 27 L16.5 22.8 H10.5" fill="none" stroke="#fd7e3f" stroke-width="1.5" stroke-linejoin="round"/></svg>
<div style="position:absolute;left:2176px;top:251px;width:43px;height:1px;background:#e3e3e3;"></div>
<div style="position:absolute;left:2174px;top:254px;width:47px;height:800px;overflow:hidden;"><div style="position:absolute;left:0px;top:4px;width:46px;height:46px;border-radius:50%;background:#00629b;color:#fff;font-size:19px;line-height:46px;text-align:center;letter-spacing:-0.5px;">JJ</div><div style="position:absolute;left:0px;top:63px;width:46px;height:46px;border-radius:50%;background:#00629b;color:#fff;font-size:19px;line-height:46px;text-align:center;letter-spacing:-0.5px;">JM</div><div style="position:absolute;left:0px;top:121px;width:46px;height:46px;border-radius:50%;background:#00629b;color:#fff;font-size:19px;line-height:46px;text-align:center;letter-spacing:-0.5px;">BE</div><div style="position:absolute;left:0px;top:179px;width:46px;height:46px;border-radius:50%;background:#00629b;color:#fff;font-size:19px;line-height:46px;text-align:center;letter-spacing:-0.5px;">PJ</div><div style="position:absolute;left:0px;top:238px;width:46px;height:46px;border-radius:50%;background:#00629b;color:#fff;font-size:19px;line-height:46px;text-align:center;letter-spacing:-0.5px;">PJ</div><div style="position:absolute;left:0px;top:297px;width:20px;height:21px;border-radius:50%;background:#00629b;color:#fff;font-size:9.5px;line-height:21px;text-align:center;letter-spacing:-0.3px;">AR</div><div style="position:absolute;left:25px;top:297px;width:20px;height:21px;border-radius:50%;background:#00629b;color:#fff;font-size:9.5px;line-height:21px;text-align:center;letter-spacing:-0.3px;">BE</div><div style="position:absolute;left:0px;top:320px;width:20px;height:21px;border-radius:50%;background:#00629b;color:#fff;font-size:9.5px;line-height:21px;text-align:center;letter-spacing:-0.3px;">JM</div><div style="position:absolute;left:25px;top:320px;width:20px;height:21px;border-radius:50%;background:#00629b;color:#fff;font-size:9.5px;line-height:21px;text-align:center;letter-spacing:-0.3px;">PJ</div><div style="position:absolute;left:0px;top:354px;width:46px;height:46px;border-radius:50%;background:#00629b;color:#fff;font-size:19px;line-height:46px;text-align:center;letter-spacing:-0.5px;">JJ</div><div style="position:absolute;left:0px;top:414px;width:20px;height:21px;border-radius:50%;background:#00629b;color:#fff;font-size:9.5px;line-height:21px;text-align:center;letter-spacing:-0.3px;">AR</div><div style="position:absolute;left:25px;top:414px;width:20px;height:21px;border-radius:50%;background:#00629b;color:#fff;font-size:9.5px;line-height:21px;text-align:center;letter-spacing:-0.3px;">BE</div><div style="position:absolute;left:0px;top:437px;width:20px;height:21px;border-radius:50%;background:#00629b;color:#fff;font-size:9.5px;line-height:21px;text-align:center;letter-spacing:-0.3px;">JM</div><div style="position:absolute;left:25px;top:437px;width:20px;height:21px;border-radius:50%;background:#00629b;color:#fff;font-size:9.5px;line-height:21px;text-align:center;letter-spacing:-0.3px;">PJ</div><div style="position:absolute;left:0px;top:471px;width:46px;height:46px;border-radius:50%;background:#00629b;color:#fff;font-size:19px;line-height:46px;text-align:center;letter-spacing:-0.5px;">PJ</div><div style="position:absolute;left:0px;top:529px;width:46px;height:46px;border-radius:50%;background:#00629b;color:#fff;font-size:19px;line-height:46px;text-align:center;letter-spacing:-0.5px;">AR</div><div style="position:absolute;left:0px;top:587px;width:46px;height:46px;border-radius:50%;background:#00629b;color:#fff;font-size:19px;line-height:46px;text-align:center;letter-spacing:-0.5px;">JJ</div><div style="position:absolute;left:0px;top:645px;width:46px;height:46px;border-radius:50%;background:#00629b;color:#fff;font-size:19px;line-height:46px;text-align:center;letter-spacing:-0.5px;">PJ</div><div style="position:absolute;left:0px;top:705px;width:20px;height:21px;border-radius:50%;background:#00629b;color:#fff;font-size:9.5px;line-height:21px;text-align:center;letter-spacing:-0.3px;">BE</div><div style="position:absolute;left:25px;top:705px;width:20px;height:21px;border-radius:50%;background:#00629b;color:#fff;font-size:9.5px;line-height:21px;text-align:center;letter-spacing:-0.3px;">CB</div><div style="position:absolute;left:0px;top:728px;width:20px;height:21px;border-radius:50%;background:#00629b;color:#fff;font-size:9.5px;line-height:21px;text-align:center;letter-spacing:-0.3px;">JM</div><div style="position:absolute;left:0px;top:762px;width:46px;height:46px;border-radius:50%;background:#00629b;color:#fff;font-size:19px;line-height:46px;text-align:center;letter-spacing:-0.5px;">PJ</div></div>
<div style="position:absolute;left:2221px;top:196px;width:8px;height:790px;background:#c1c1c1;border-radius:4px;"></div>
<div style="position:absolute;left:2179px;top:1064px;width:47px;height:1px;background:#e3e3e3;"></div>
<div style="position:absolute;left:2179px;top:1122px;width:47px;height:1px;background:#e3e3e3;"></div>
<div style="position:absolute;left:2179px;top:1181px;width:47px;height:1px;background:#e3e3e3;"></div>
<svg style="position:absolute;left:2188px;top:1081px;" width="26" height="26" viewBox="0 0 26 26"><path d="M20.5 5.5 A11 11 0 1 0 23 11" fill="none" stroke="#fd7e3f" stroke-width="1.7"/><path d="M7 11.5 L11.5 16 L21 6" fill="none" stroke="#fd7e3f" stroke-width="1.7"/></svg>
<svg style="position:absolute;left:2188px;top:1143px;" width="26" height="23" viewBox="0 0 26 23"><path d="M4.5 17 H3.5 A2.5 2.5 0 0 1 1 14.5 V3.8 A2.5 2.5 0 0 1 3.5 1.3 H21.5 A2.5 2.5 0 0 1 24 3.8 V14.5 A2.5 2.5 0 0 1 21.5 17 H9.5 L4.8 20.5 Z" fill="none" stroke="#fd7e3f" stroke-width="1.6" stroke-linejoin="round"/><path d="M6.5 7 H18.5 M6.5 10.5 H18.5" stroke="#fd7e3f" stroke-width="1.6"/></svg>
<svg style="position:absolute;left:2188px;top:1198px;" width="26" height="26" viewBox="0 0 26 26"><circle cx="12.7" cy="12.6" r="11" fill="none" stroke="#fd7e3f" stroke-width="1.7"/><path d="M9 9.5 A3.8 3.8 0 1 1 13.5 13.2 Q12.8 13.6 12.8 14.6 V16.5" fill="none" stroke="#fd7e3f" stroke-width="1.7"/><circle cx="12.8" cy="19.6" r="1.2" fill="#fd7e3f"/></svg>
<div style="position:absolute;left:2231px;top:0px;width:25px;height:1246px;background:#f1f1f1;"></div>
<div style="position:absolute;left:2230px;top:1px;width:1px;height:1245px;background:#d4d4d4;"></div>
<div style="position:absolute;left:2233px;top:23px;width:21px;height:996px;background:#c1c1c1;"></div>
<svg style="position:absolute;left:2237px;top:7px;" width="13" height="8" viewBox="0 0 13 8"><path d="M0.5 7.2 L6.3 0.8 L12.1 7.2 Z" fill="#a3a3a3"/></svg>
<svg style="position:absolute;left:2237px;top:1232px;" width="13" height="8" viewBox="0 0 13 8"><path d="M0.5 0.8 L6.3 7.2 L12.1 0.8 Z" fill="#505050"/></svg></body></html>
